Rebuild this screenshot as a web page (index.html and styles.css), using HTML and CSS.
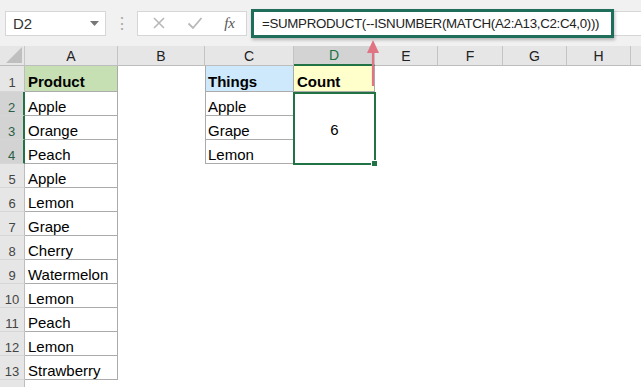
FILE: index.html
```html
<!DOCTYPE html>
<html>
<head>
  <meta charset="UTF-8">
  <title>SUMPRODUCT count</title>
  <link rel="stylesheet" href="styles.css">
</head>
<body>
  <div class="toolbar">
    <div class="namebox">
      <span>D2</span>
      <svg class="drop" width="9" height="5" viewBox="0 0 9 5"><path d="M0 0h9L4.5 5z" fill="#777"/></svg>
    </div>
    <div class="dots">⋮</div>
    <div class="fbuttons">
      <svg width="14" height="14" viewBox="0 0 14 14"><path d="M2 2l10 10M12 2L2 12" stroke="#b8b8b8" stroke-width="1.6"/></svg>
      <svg width="16" height="14" viewBox="0 0 16 14"><path d="M1.5 7.5l4.5 4.5 8.5-10" fill="none" stroke="#b8b8b8" stroke-width="1.8"/></svg>
      <span class="fx">fx</span>
    </div>
    <div class="formula">=SUMPRODUCT(--ISNUMBER(MATCH(A2:A13,C2:C4,0)))</div>
    <div class="rest"></div>
  </div>

  <div class="sheet">
    <div class="corner"><svg width="16" height="16" viewBox="0 0 16 16"><path d="M16 0V16H0z" fill="#bfbfbf"/></svg></div>
    <div class="colhead">A</div>
    <div class="colhead">B</div>
    <div class="colhead">C</div>
    <div class="colhead sel">D</div>
    <div class="colhead">E</div>
    <div class="colhead">F</div>
    <div class="colhead">G</div>
    <div class="colhead">H</div>
    <div class="colhead last"></div>

    <div class="rowhead">1</div>
    <div class="cell box head green">Product</div>
    <div class="cell"></div>
    <div class="cell box head blue first">Things</div>
    <div class="cell box head yellow">Count</div>
    <div class="cell"></div><div class="cell"></div><div class="cell"></div><div class="cell"></div><div class="cell"></div>

    <div class="rowhead sel">2</div>
    <div class="cell box">Apple</div>
    <div class="cell"></div>
    <div class="cell box first">Apple</div>
    <div class="merged">6<span class="handle"></span></div>
    <div class="cell"></div><div class="cell"></div><div class="cell"></div><div class="cell"></div><div class="cell"></div>

    <div class="rowhead sel">3</div>
    <div class="cell box">Orange</div>
    <div class="cell"></div>
    <div class="cell box first">Grape</div>
    <div class="cell"></div><div class="cell"></div><div class="cell"></div><div class="cell"></div><div class="cell"></div>

    <div class="rowhead sel">4</div>
    <div class="cell box">Peach</div>
    <div class="cell"></div>
    <div class="cell box first">Lemon</div>
    <div class="cell"></div><div class="cell"></div><div class="cell"></div><div class="cell"></div><div class="cell"></div>

    <div class="rowhead">5</div>
    <div class="cell box">Apple</div>
    <div class="cell span"></div>

    <div class="rowhead">6</div>
    <div class="cell box">Lemon</div>
    <div class="cell span"></div>

    <div class="rowhead">7</div>
    <div class="cell box">Grape</div>
    <div class="cell span"></div>

    <div class="rowhead">8</div>
    <div class="cell box">Cherry</div>
    <div class="cell span"></div>

    <div class="rowhead">9</div>
    <div class="cell box">Watermelon</div>
    <div class="cell span"></div>

    <div class="rowhead">10</div>
    <div class="cell box">Lemon</div>
    <div class="cell span"></div>

    <div class="rowhead">11</div>
    <div class="cell box">Peach</div>
    <div class="cell span"></div>

    <div class="rowhead">12</div>
    <div class="cell box">Lemon</div>
    <div class="cell span"></div>

    <div class="rowhead">13</div>
    <div class="cell box">Strawberry</div>
    <div class="cell span"></div>

    <div class="rowhead"></div>
    <div class="cell span-all"></div>

    <svg class="arrow" width="14" height="48" viewBox="0 0 14 48">
      <path d="M7 46V10" stroke="#e07482" stroke-width="2.2"/>
      <path d="M7 0L13 13H1z" fill="#e07482"/>
    </svg>
  </div>
</body>
</html>
```

FILE: styles.css
```css
body {
  margin: 0;
  width: 641px;
  height: 387px;
  overflow: hidden;
  background: #fff;
  font-family: "Liberation Sans", Arial, sans-serif;
}

.toolbar {
  display: flex;
  align-items: center;
  height: 46px;
  background: #f1f1f1;
  padding-left: 5px;
  box-sizing: border-box;
}
.namebox {
  width: 101px;
  height: 25px;
  box-sizing: border-box;
  background: #fff;
  border: 1px solid #d6d6d6;
  display: flex;
  align-items: center;
  justify-content: space-between;
  padding: 0 6px 0 7px;
  font-size: 15px;
  color: #333;
}
.dots {
  width: 31px;
  text-align: center;
  color: #a8a8a8;
  font-size: 16px;
}
.fbuttons {
  width: 110px;
  height: 25px;
  box-sizing: border-box;
  background: #fff;
  border: 1px solid #d6d6d6;
  display: flex;
  align-items: center;
  justify-content: space-between;
  padding: 0 11px 0 14px;
}
.fx {
  font-family: "Liberation Serif", serif;
  font-style: italic;
  font-size: 15px;
  color: #555;
}
.formula {
  margin-left: 4px;
  width: 363px;
  height: 29px;
  box-sizing: border-box;
  background: #fff;
  border: 3px solid #1f6e5c;
  box-shadow: 1px 2px 3px rgba(0,0,0,0.25);
  padding-left: 8px;
  display: flex;
  align-items: center;
  font-size: 13.3px;
  letter-spacing: -0.3px;
  color: #222;
  white-space: nowrap;
  position: relative;
  z-index: 1;
}
.rest {
  flex: 1;
  height: 25px;
  background: #fff;
  border-top: 1px solid #d6d6d6;
  border-bottom: 1px solid #d6d6d6;
  box-sizing: border-box;
}

.sheet {
  position: relative;
  display: grid;
  grid-template-columns: 25px 93px 87px 89px 81px 63px 65px 64px 64px 10px;
  grid-template-rows: 20px 26px repeat(12, 24px) 7px;
}
.corner {
  background: #e6e6e6;
  border-right: 1px solid #c8c8c8;
  border-bottom: 1px solid #bdbdbd;
  display: flex;
  align-items: flex-end;
  justify-content: flex-end;
  padding: 0 2px 2px 0;
  box-sizing: border-box;
}
.colhead {
  background: #e6e6e6;
  border-right: 1px solid #c4c4c4;
  border-bottom: 1px solid #bdbdbd;
  box-sizing: border-box;
  font-size: 14px;
  color: #222;
  display: flex;
  align-items: center;
  justify-content: center;
}
.colhead.sel {
  background: #d3d3d3;
  color: #217346;
  border-bottom: 2px solid #217346;
}
.colhead.last {
  border-right: none;
}
.rowhead {
  background: #e6e6e6;
  border-right: 1px solid #bdbdbd;
  border-bottom: 1px solid #d6d6d6;
  box-sizing: border-box;
  font-size: 13px;
  color: #444;
  display: flex;
  align-items: center;
  justify-content: center;
  padding-top: 7px;
}
.rowhead.sel {
  background: #d3d3d3;
  border-right: 2px solid #217346;
  color: #2a5f45;
}

.cell {
  box-sizing: border-box;
  font-size: 15px;
  color: #000;
  display: flex;
  align-items: flex-end;
  padding: 0 0 0 3px;
  white-space: nowrap;
}
.cell.box {
  border-right: 1px solid #ababab;
  border-bottom: 1px solid #ababab;
}
.cell.first {
  border-left: 1px solid #ababab;
  padding-left: 2px;
}
.cell.head {
  font-weight: bold;
  padding-bottom: 1px;
}
.green { background: #c6e0b4; }
.blue { background: #cde9fb; }
.yellow { background: #ffffcc; }
.span { grid-column: 3 / 11; }
.span-all { grid-column: 2 / 11; }

.merged {
  grid-column: 5;
  grid-row: 3 / 6;
  position: relative;
  margin: 0 -1px -1px -1px;
  border: 2px solid #217346;
  font-size: 15px;
  display: flex;
  align-items: center;
  justify-content: center;
  padding-top: 2px;
}
.handle {
  position: absolute;
  right: -4px;
  bottom: -4px;
  width: 5px;
  height: 5px;
  background: #217346;
  border: 1px solid #fff;
}

.arrow {
  position: absolute;
  left: 366px;
  top: -6px;
  z-index: 2;
}
```
